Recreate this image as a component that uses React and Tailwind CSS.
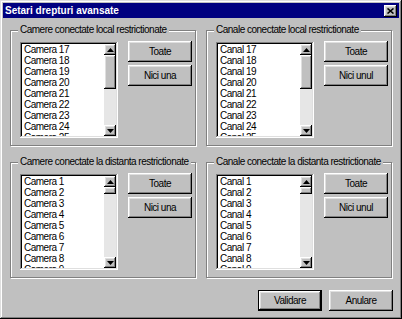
import React from "react";

const raised =
  "bg-[#c0c0c0] shadow-[inset_-1px_-1px_#000,inset_1px_1px_#fff,inset_-2px_-2px_#808080,inset_2px_2px_#dfdfdf]";
const sunken =
  "shadow-[inset_-1px_-1px_#fff,inset_1px_1px_#808080,inset_-2px_-2px_#dfdfdf,inset_2px_2px_#000]";

function Arrow({ down }) {
  return (
    <div className={`flex h-[11px] w-full shrink-0 items-center justify-center ${raised}`}>
      <svg width="7" height="4" viewBox="0 0 7 4">
        {down ? <path d="M0 0h7L3.5 4z" fill="#000" /> : <path d="M0 4h7L3.5 0z" fill="#000" />}
      </svg>
    </div>
  );
}

function ListBox({ prefix, from, thumb }) {
  const items = [];
  for (let i = 0; i < 9; i++) items.push(`${prefix} ${from + i}`);
  return (
    <div className={`flex h-[96px] w-[98px] bg-white p-[2px] ${sunken}`}>
      <div className="flex-1 overflow-hidden pl-[2px]">
        {items.map((t) => (
          <div key={t} className="h-[11px] leading-[11px] whitespace-nowrap text-black">
            {t}
          </div>
        ))}
      </div>
      <div className="flex w-[12px] flex-col bg-[#e6e6e6]">
        <Arrow />
        <div className={`w-full ${thumb} ${raised}`} />
        <div className="flex-1" />
        <Arrow down />
      </div>
    </div>
  );
}

function Btn({ children, def }) {
  return (
    <button
      className={`flex h-[21px] w-[64px] items-center justify-center text-black ${raised} ${
        def ? "border border-black" : ""
      }`}
    >
      {children}
    </button>
  );
}

function Group({ title, prefix, from, thumb, none }) {
  return (
    <div className="relative h-[116px] w-[186px] border border-[#808080] pt-[10px] pl-[9px] shadow-[inset_1px_1px_#fff,1px_1px_#fff]">
      <div className="absolute -top-[7px] left-[7px] bg-[#c0c0c0] px-[2px] leading-[12px] whitespace-nowrap">
        {title}
      </div>
      <div className="flex gap-[10px]">
        <div className="pt-[1px]">
          <ListBox prefix={prefix} from={from} thumb={thumb} />
        </div>
        <div className="flex flex-col gap-[3px]">
          <Btn>Toate</Btn>
          <Btn>{none}</Btn>
        </div>
      </div>
    </div>
  );
}

export default function App() {
  return (
    <div className="flex h-[319px] w-[402px] flex-col bg-[#c0c0c0] p-[3px] font-['Liberation_Sans',Arial,sans-serif] text-[10px] tracking-[-0.5px] text-black shadow-[inset_-1px_-1px_#000,inset_1px_1px_#dfdfdf,inset_-2px_-2px_#808080,inset_2px_2px_#fff]">
      <div className="flex h-[15px] items-center justify-between bg-[#000080] pl-[2px] pr-[2px]">
        <span className="text-[10px] font-bold tracking-normal text-white">Setari drepturi avansate</span>
        <div className={`flex h-[12px] w-[13px] items-center justify-center ${raised}`}>
          <svg width="7" height="6" viewBox="0 0 7 6">
            <path d="M0.5 0.5l6 5M6.5 0.5l-6 5" stroke="#000" strokeWidth="1.6" />
          </svg>
        </div>
      </div>
      <div className="mt-[12px] flex flex-col gap-[16px] px-[7px]">
        <div className="flex gap-[10px]">
          <Group title="Camere conectate local restrictionate" prefix="Camera" from={17} thumb="h-[34px]" none="Nici una" />
          <Group title="Canale conectate local restrictionate" prefix="Canal" from={17} thumb="h-[34px]" none="Nici unul" />
        </div>
        <div className="flex gap-[10px]">
          <Group title="Camere conectate la distanta restrictionate" prefix="Camera" from={1} thumb="h-[7px]" none="Nici una" />
          <Group title="Canale conectate la distanta restrictionate" prefix="Canal" from={1} thumb="h-[7px]" none="Nici unul" />
        </div>
      </div>
      <div className="mt-[12px] flex justify-end gap-[7px] pr-[6px]">
        <Btn def>Validare</Btn>
        <Btn>Anulare</Btn>
      </div>
    </div>
  );
}
